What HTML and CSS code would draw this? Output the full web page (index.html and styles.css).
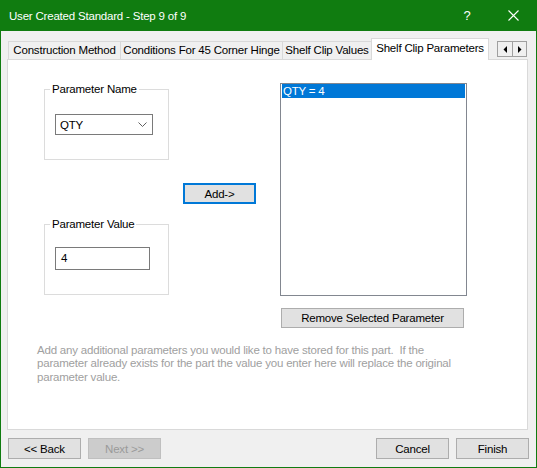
FILE: index.html
```html
<!DOCTYPE html>
<html>
<head>
<meta charset="utf-8">
<title>User Created Standard - Step 9 of 9</title>
<link rel="stylesheet" href="styles.css">
</head>
<body>
<div class="window">
  <div class="titlebar">
    <span class="title">User Created Standard - Step 9 of 9</span>
    <span class="cap-btn help">?</span>
    <span class="cap-btn close"><svg width="11" height="11" viewBox="0 0 11 11"><path d="M0.5 0.5L10.5 10.5M10.5 0.5L0.5 10.5" stroke="#fff" stroke-width="1.1" fill="none"/></svg></span>
  </div>
  <div class="client">
    <div class="tabstrip">
      <div class="tab t1">Construction Method</div>
      <div class="tab t2">Conditions For 45 Corner Hinge</div>
      <div class="tab t3">Shelf Clip Values</div>
      <div class="tab active">Shelf Clip Parameters</div>
      <div class="tabscroll">
        <span class="sbtn"><svg width="4" height="7" viewBox="0 0 4 7"><path d="M4 0L0.5 3.5L4 7Z" fill="#000"/></svg></span>
        <span class="sbtn"><svg width="4" height="7" viewBox="0 0 4 7"><path d="M0 0L3.5 3.5L0 7Z" fill="#000"/></svg></span>
      </div>
    </div>
    <div class="panel">
      <div class="top">
        <div class="leftcol">
          <fieldset class="group g1">
            <legend>Parameter Name</legend>
            <div class="combo"><span>QTY</span><svg width="9" height="5" viewBox="0 0 9 5"><path d="M0.5 0.5L4.5 4.5L8.5 0.5" stroke="#606060" stroke-width="1" fill="none"/></svg></div>
          </fieldset>
          <fieldset class="group g2">
            <legend>Parameter Value</legend>
            <div class="textbox">4</div>
          </fieldset>
        </div>
        <div class="midcol">
          <button class="btn add">Add-&gt;</button>
        </div>
        <div class="rightcol">
          <div class="listbox">
            <div class="item sel">QTY = 4</div>
          </div>
          <button class="btn remove">Remove Selected Parameter</button>
        </div>
      </div>
      <p class="note">Add any additional parameters you would like to have stored for this part.&nbsp; If the<br>parameter already exists for the part the value you enter here will replace the original<br>parameter value.</p>
    </div>
    <div class="footer">
      <button class="btn">&lt;&lt; Back</button>
      <button class="btn disabled">Next &gt;&gt;</button>
      <span class="spacer"></span>
      <button class="btn">Cancel</button>
      <button class="btn finish">Finish</button>
    </div>
  </div>
</div>
</body>
</html>
```
FILE: styles.css
```css
* { box-sizing: border-box; }
html, body { margin: 0; padding: 0; background: #ffffff; }
body {
  font-family: "Liberation Sans", Arial, sans-serif;
  font-size: 11.5px;
  letter-spacing: -0.2px;
  color: #000;
}
.window {
  width: 537px;
  height: 468px;
  border: 1px solid #107c10;
  border-top: 0;
  background: #f0f0f0;
  display: flex;
  flex-direction: column;
}
.titlebar {
  flex: none;
  height: 31px;
  background: #107c10;
  color: #fff;
  display: flex;
  align-items: center;
  padding-left: 8px;
  font-size: 11.5px;
}
.title { flex: 1; }
.cap-btn {
  width: 46px;
  height: 31px;
  display: flex;
  align-items: center;
  justify-content: center;
}
.help { font-size: 13px; }
.client {
  flex: 1;
  display: flex;
  flex-direction: column;
  padding-top: 7px;
}
.tabstrip {
  height: 21px;
  display: flex;
  align-items: flex-end;
  margin-left: 7px;
}
.tab {
  height: 18px;
  line-height: 17px;
  text-align: center;
  white-space: nowrap;
  border-top: 1px solid #d9d9d9;
  border-left: 1px solid #d9d9d9;
  background: #f0f0f0;
}
.t1 { width: 112px; }
.t2 { width: 162px; }
.t3 { width: 89px; }
.tab.active {
  width: 118px;
  height: 22px;
  line-height: 19px;
  margin-bottom: -1px;
  border-right: 1px solid #d9d9d9;
  background: #fff;
  position: relative;
  z-index: 1;
}
.tabscroll {
  align-self: flex-start;
  margin-top: 3px;
  margin-left: 8px;
  display: flex;
  border: 1px solid #a0a0a0;
  background: #f0f0f0;
}
.sbtn {
  width: 14px;
  height: 14px;
  display: flex;
  align-items: center;
  justify-content: center;
}
.sbtn + .sbtn { border-left: 1px solid #a0a0a0; }
.panel {
  height: 371px;
  margin: 0 8px 0 6px;
  background: #fff;
  border: 1px solid #d9d9d9;
  padding-top: 22px;
}
.top {
  display: flex;
  align-items: flex-start;
}
.leftcol {
  margin-left: 36px;
  width: 125px;
  display: flex;
  flex-direction: column;
}
.group {
  margin: 0;
  border: 1px solid #dcdcdc;
  min-width: 0;
}
.group legend {
  padding: 0 2px;
  margin-left: -5px;
  line-height: 14px;
}
.g1 { padding: 18px 15px 24px 10px; }
.g2 { margin-top: 57px; padding: 16px 18px 24px 10px; }
.combo {
  width: 98px;
  height: 21px;
  border: 1px solid #7a7a7a;
  background: #fff;
  display: flex;
  align-items: center;
  justify-content: space-between;
  padding: 0 5px 0 4px;
}
.textbox {
  width: 95px;
  height: 23px;
  border: 1px solid #7a7a7a;
  background: #fff;
  line-height: 21px;
  padding-left: 5px;
}
.midcol {
  margin-left: 14px;
  padding-top: 101px;
}
.btn {
  font: inherit;
  letter-spacing: inherit;
  color: #000;
  width: 73px;
  height: 21px;
  padding: 0;
  margin: 0;
  background: #e1e1e1;
  border: 1px solid #adadad;
}
.btn.add { border: 2px solid #0078d7; }
.rightcol {
  margin-left: 24px;
  padding-top: 1px;
  display: flex;
  flex-direction: column;
}
.listbox {
  width: 187px;
  height: 213px;
  border: 1px solid #828790;
  background: #fff;
  padding: 0 1px;
}
.item {
  height: 14px;
  line-height: 14px;
  padding-left: 1px;
}
.item.sel { background: #0078d7; color: #fff; }
.btn.remove {
  width: 183px;
  height: 20px;
  margin: 12px 0 0 1px;
}
.note {
  margin: 16px 0 0 29px;
  line-height: 13.33px;
  color: #a0a0a0;
}
.footer {
  display: flex;
  margin: 8px 7px 0 7px;
}
.footer .btn + .btn { margin-left: 7px; }
.footer .spacer { flex: 1; }
.footer .finish { margin-left: 8px; }
.btn.disabled {
  background: #cccccc;
  border-color: #bfbfbf;
  color: #9a9a9a;
}
```
